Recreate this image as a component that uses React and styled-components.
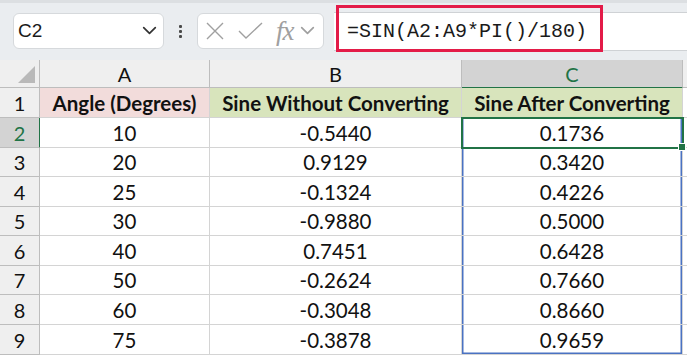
import React from 'react'
import styled, { createGlobalStyle } from 'styled-components'

const GlobalStyle = createGlobalStyle`
  html, body {
    margin: 0;
    padding: 0;
    background: #ffffff;
    overflow: hidden;
  }
`

const rows = [
  [10, '-0.5440', '0.1736'],
  [20, '0.9129', '0.3420'],
  [25, '-0.1324', '0.4226'],
  [30, '-0.9880', '0.5000'],
  [40, '0.7451', '0.6428'],
  [50, '-0.2624', '0.7660'],
  [60, '-0.3048', '0.8660'],
  [75, '-0.3878', '0.9659'],
]

const rowHeights = [30, 30, 29, 30, 29, 30, 29, 30, 30]

const Chevron = ({ size = 14, color = '#444' }) => (
  <svg width={size} height={size / 2 + 2} viewBox="0 0 14 9">
    <polyline points="1.5,1.5 7,7 12.5,1.5" fill="none" stroke={color} strokeWidth="1.6" strokeLinecap="round" strokeLinejoin="round" />
  </svg>
)

const App = () => {
  return (
    <Page>
      <GlobalStyle />
      <Toolbar>
        <NameBox>
          <span>C2</span>
          <Chevron size={15} color="#333" />
        </NameBox>
        <Dots>
          <i />
          <i />
          <i />
        </Dots>
        <FxBox>
          <svg width="18" height="18" viewBox="0 0 18 18">
            <path d="M1 1 L17 17 M17 1 L1 17" stroke="#a0a0a0" strokeWidth="1.4" fill="none" />
          </svg>
          <svg width="25" height="18" viewBox="0 0 25 18">
            <polyline points="1,9 8,16 24,1" stroke="#a0a0a0" strokeWidth="1.4" fill="none" />
          </svg>
          <Fx>fx</Fx>
          <Chevron size={15} color="#a0a0a0" />
        </FxBox>
        <FormulaBar>
          <Formula>=SIN(A2:A9*PI()/180)</Formula>
        </FormulaBar>
      </Toolbar>

      <Sheet $rows={rowHeights}>
        <Corner />
        <ColHead>A</ColHead>
        <ColHead>B</ColHead>
        <ColHead $active>C</ColHead>
        <ColHead $last />

        <RowHead>1</RowHead>
        <Cell $bold $bg="#f2dcdb">Angle (Degrees)</Cell>
        <Cell $bold $bg="#d8e4bc">Sine Without Converting</Cell>
        <Cell $bold $bg="#d8e4bc">Sine After Converting</Cell>
        <Cell $last />

        {rows.map((r, i) => (
          <React.Fragment key={i}>
            <RowHead $active={i === 0}>{i + 2}</RowHead>
            <Cell>{r[0]}</Cell>
            <Cell>{r[1]}</Cell>
            <Cell $range $end={i === rows.length - 1} $selected={i === 0}>{r[2]}</Cell>
            <Cell $last />
          </React.Fragment>
        ))}
      </Sheet>
    </Page>
  )
}

const Page = styled.div`
  width: 687px;
  height: 358px;
  overflow: hidden;
  background: #ffffff;
  font-family: Lato, "Open Sans", sans-serif;
`

const Toolbar = styled.div`
  height: 60px;
  box-sizing: border-box;
  background: #eaedf0;
  border-top: 3px solid #dcdfe2;
  display: flex;
  align-items: center;
  padding: 0 0 1px 13px;
  position: relative;
`

const NameBox = styled.div`
  width: 151px;
  height: 36px;
  box-sizing: border-box;
  background: #ffffff;
  border: 1px solid #d6d9dc;
  border-radius: 6px;
  display: flex;
  align-items: center;
  justify-content: space-between;
  padding: 0 6px 0 4px;
  font-family: "Liberation Sans", Arial, sans-serif;
  font-size: 19px;
  color: #1a1a1a;
`

const Dots = styled.div`
  width: 33px;
  display: flex;
  flex-direction: column;
  align-items: center;
  gap: 2px;

  i {
    width: 3px;
    height: 3px;
    background: #4a4a4a;
    border-radius: 1px;
  }
`

const FxBox = styled.div`
  width: 127px;
  height: 36px;
  box-sizing: border-box;
  background: #ffffff;
  border: 1px solid #d6d9dc;
  border-radius: 6px;
  display: flex;
  align-items: center;
  gap: 14px;
  padding: 0 0 0 8px;

  svg:last-child {
    margin-left: -8px;
  }
`

const Fx = styled.span`
  font-family: "Liberation Serif", "Times New Roman", serif;
  font-style: italic;
  font-size: 27px;
  color: #a0a0a0;
  margin-left: -1px;
  line-height: 1;
  letter-spacing: -1px;
`

const FormulaBar = styled.div`
  flex: 1;
  margin-left: 10px;
  height: 37px;
  background: #ffffff;
  border-top: 1px solid #cfd2d5;
  border-bottom: 1px solid #cfd2d5;
  display: flex;
  align-items: center;
  position: relative;
`

const Formula = styled.span`
  font-family: "Liberation Mono", "Courier New", monospace;
  font-size: 20px;
  color: #1a1a1a;
  margin-left: 13px;

  &::before {
    content: '';
    position: absolute;
    left: 2px;
    top: -8px;
    width: 267px;
    height: 47px;
    box-sizing: border-box;
    border: 3.5px solid #e31b48;
  }
`

const Sheet = styled.div`
  display: grid;
  grid-template-columns: 40px 170px 252px 221px 1fr;
  grid-template-rows: 28px ${(p) => p.$rows.map((h) => `${h}px`).join(' ')} 20px;
  font-family: Lato, Carlito, "Open Sans", sans-serif;
  font-size: 20.5px;
  color: #111111;
`

const Corner = styled.div`
  background: #efefef;
  border-right: 1px solid #bdbdbd;
  border-bottom: 1px solid #bdbdbd;
  position: relative;

  &::after {
    content: '';
    position: absolute;
    right: 4px;
    bottom: 4px;
    width: 0;
    height: 0;
    border-left: 17px solid transparent;
    border-bottom: 17px solid #b9b9b9;
  }
`

const ColHead = styled.div`
  background: ${(p) => (p.$active ? '#d3d3d3' : '#efefef')};
  color: ${(p) => (p.$active ? '#217346' : '#111111')};
  border-right: ${(p) => (p.$last ? 'none' : '1px solid #bdbdbd')};
  border-bottom: ${(p) => (p.$active ? '2px solid #217346' : '1px solid #bdbdbd')};
  display: flex;
  align-items: center;
  justify-content: center;
  font-size: 20px;
  box-sizing: border-box;
  margin-bottom: ${(p) => (p.$active ? '-1px' : '0')};
`

const RowHead = styled.div`
  background: ${(p) => (p.$active ? '#d3d3d3' : '#efefef')};
  color: ${(p) => (p.$active ? '#217346' : '#111111')};
  border-right: ${(p) => (p.$active ? '2px solid #217346' : '1px solid #bdbdbd')};
  border-bottom: 1px solid #bdbdbd;
  margin-right: ${(p) => (p.$active ? '-1px' : '0')};
  display: flex;
  align-items: center;
  justify-content: center;
  font-size: 20px;
  box-sizing: border-box;
`

const Cell = styled.div`
  background: ${(p) => p.$bg || '#ffffff'};
  font-weight: ${(p) => (p.$bold ? 700 : 400)};
  border-right: ${(p) => (p.$last ? 'none' : '1px solid #d4d4d4')};
  border-bottom: 1px solid #d4d4d4;
  display: flex;
  align-items: center;
  justify-content: center;
  white-space: nowrap;
  position: relative;
  box-sizing: border-box;
  box-shadow: ${(p) =>
    p.$range
      ? `inset 1.5px 0 0 #4a72c2, inset -1.5px 0 0 #4a72c2${p.$end ? ', inset 0 -1.5px 0 #4a72c2' : ''}`
      : 'none'};

  ${(p) =>
    p.$selected &&
    `
    outline: 2px solid #217346;
    outline-offset: -1px;
    z-index: 2;
    &::after {
      content: '';
      position: absolute;
      right: -4px;
      bottom: -4px;
      width: 6px;
      height: 6px;
      background: #217346;
      border: 1px solid #ffffff;
    }
  `}
`

export default App
